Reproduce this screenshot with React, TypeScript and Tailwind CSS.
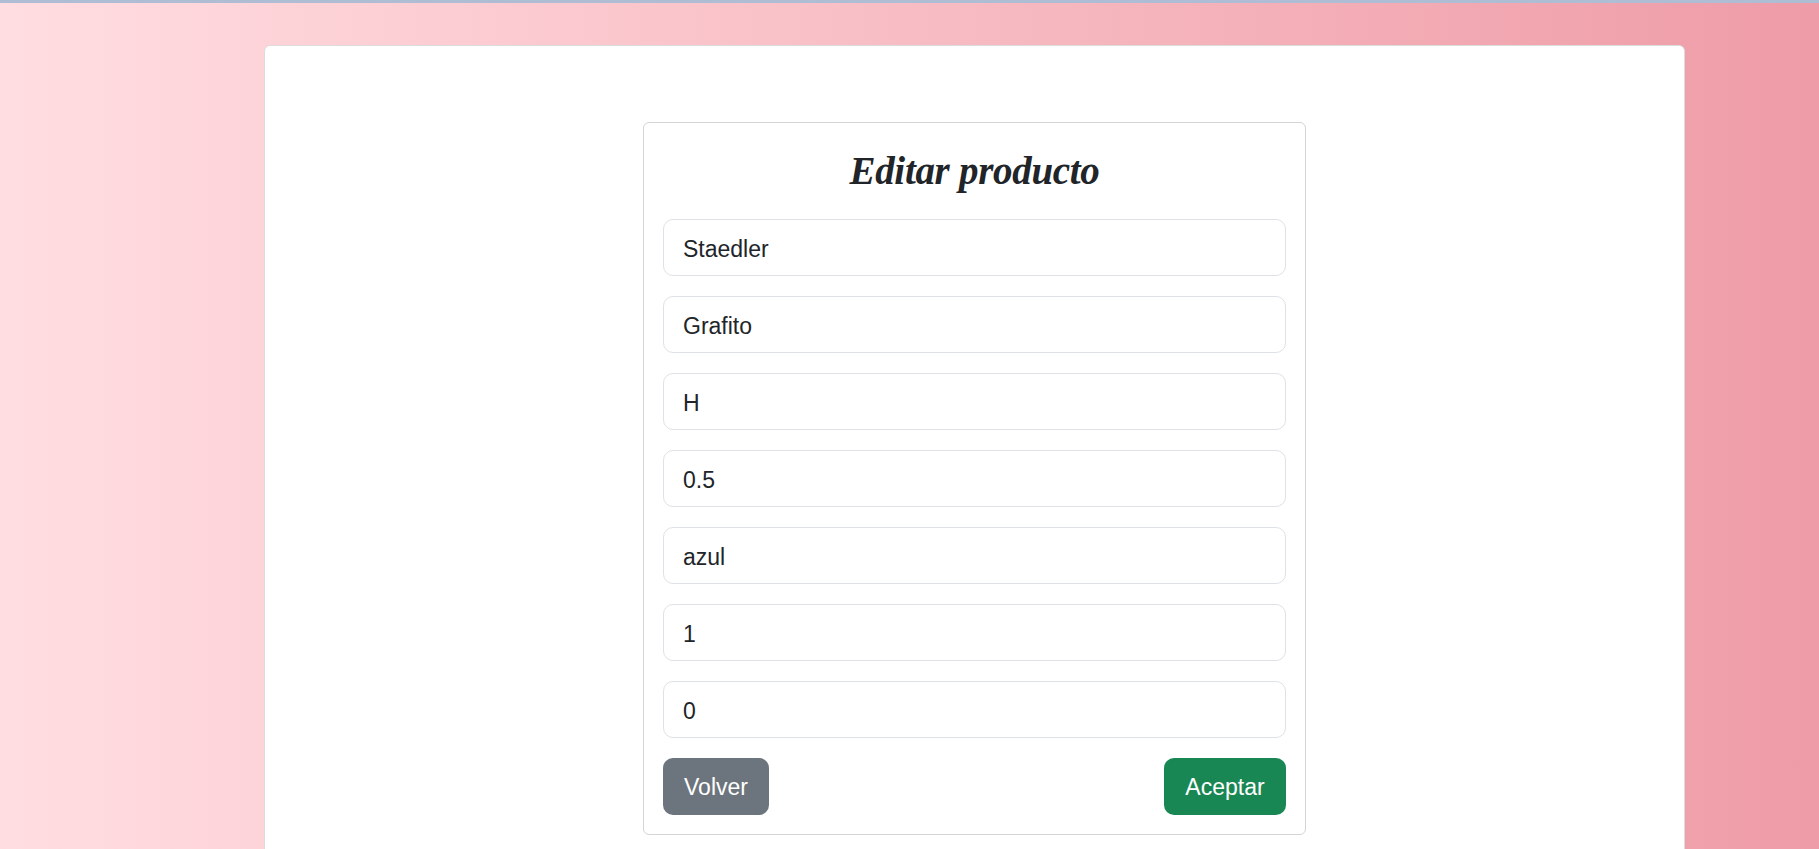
import React from "react";

const fields = ["Staedler", "Grafito", "H", "0.5", "azul", "1", "0"];

const EditarProducto = () => {
  return (
    <div className="w-[663px] self-start rounded-[6px] border border-[#d5d5d5] bg-white px-[19px] pt-[19px] pb-[19px]">
      <h2 className="mt-[6px] mb-[25px] h-[46px] text-center font-['Liberation_Serif',serif] text-[39px] leading-[46px] font-bold italic tracking-[-0.3px] text-[#212529]">
        Editar producto
      </h2>
      <div className="flex flex-col gap-[20px]">
        {fields.map((value, i) => (
          <input
            key={i}
            defaultValue={value}
            className="h-[57px] w-full rounded-[10px] border border-[#dee2e6] bg-white px-[19px] pt-[4px] font-['Liberation_Sans',Arial,sans-serif] text-[23px] text-[#212529] outline-none"
          />
        ))}
        <div className="flex items-center justify-between">
          <button className="h-[57px] w-[106px] rounded-[10px] bg-[#6c757d] pt-[2px] font-['Liberation_Sans',Arial,sans-serif] text-[23px] text-white">
            Volver
          </button>
          <button className="h-[57px] w-[122px] rounded-[10px] bg-[#198754] pt-[2px] font-['Liberation_Sans',Arial,sans-serif] text-[23px] text-white">
            Aceptar
          </button>
        </div>
      </div>
    </div>
  );
};

export default function App() {
  return (
    <div className="h-[849px] overflow-hidden border-t-[3px] border-[#aebcd4] bg-gradient-to-r from-[#ffdde1] to-[#ee9ca7] pt-[42px] pl-[264px] pr-[134px]">
      <div className="flex h-[900px] justify-center rounded-[6px] border border-[#dcdcdc] bg-white pt-[76px]">
        <EditarProducto />
      </div>
    </div>
  );
}
